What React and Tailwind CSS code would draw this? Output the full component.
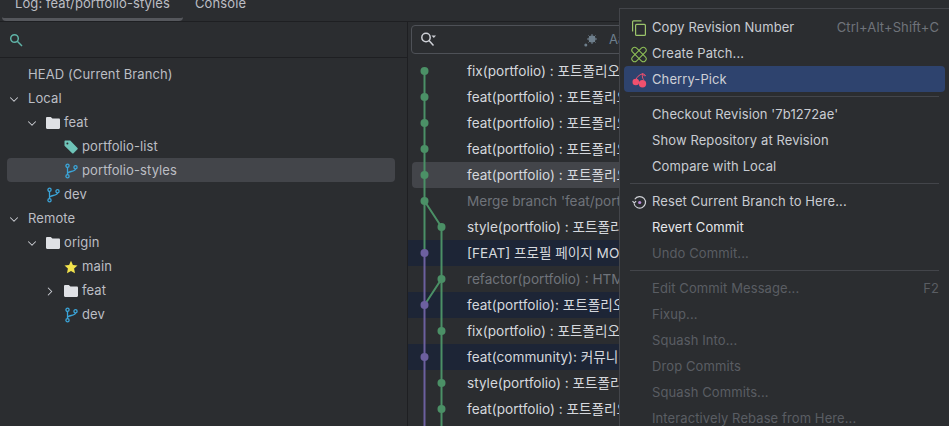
import React from "react";
import { ChevronDown, ChevronRight } from "lucide-react";

const BranchIcon = () => (
  <svg width="14" height="16" viewBox="0 0 14 16" fill="none" stroke="#3ba5d9" strokeWidth="1.3">
    <circle cx="3.5" cy="2.8" r="1.6" />
    <circle cx="3.5" cy="13.2" r="1.6" />
    <circle cx="11.5" cy="4.3" r="1.6" />
    <path d="M3.5 4.4v7.2M3.5 10.5c0-2.4 8-1.6 8-4.6" />
  </svg>
);

const FolderIcon = () => (
  <svg width="14" height="12" viewBox="0 0 14 12">
    <path d="M1.2 0h3.6l1.6 1.6h6.4c.7 0 1.2.5 1.2 1.2v8c0 .7-.5 1.2-1.2 1.2H1.2C.5 12 0 11.5 0 10.8V1.2C0 .5.5 0 1.2 0z" fill="#dfe1e5" />
  </svg>
);

const TagIcon = () => (
  <svg width="14" height="14" viewBox="0 0 14 14">
    <path d="M.5 1.2c0-.4.3-.7.7-.7h5l7.3 7.5c.4.4.4.9 0 1.3l-4 4c-.4.4-.9.4-1.3 0L.5 5.8z" fill="#6fc4b8" />
    <circle cx="3.4" cy="3.4" r="1" fill="#2b2d30" />
  </svg>
);

const StarIcon = () => (
  <svg width="14" height="14" viewBox="0 0 14 14">
    <path d="M7 .8l1.9 4.2 4.6.5-3.4 3.1.9 4.6L7 10.9l-4 2.300.9-4.600L.5 5.500l4.600-.5z" fill="#f2e34c" />
  </svg>
);

const SearchIcon = () => (
  <svg width="14" height="14" viewBox="0 0 14 14" fill="none" stroke="#5fb3a7" strokeWidth="1.5">
    <circle cx="5.5" cy="5.5" r="3.8" />
    <path d="M8.3 8.3l4.7 4.7" />
  </svg>
);

const CopyIcon = () => (
  <svg width="16" height="16" viewBox="0 0 16 16" fill="none" stroke="#9cc56b" strokeWidth="1.2">
    <path d="M1.6 11.5V1.700c0-.5.3-.9.9-.9h8" />
    <rect x="4.6" y="4.4" width="9.8" height="11" rx="1" />
  </svg>
);

const PatchIcon = () => (
  <svg width="17" height="17" viewBox="0 0 17 17" fill="none" stroke="#8fc057" strokeWidth="1.1">
    <rect x="-1" y="5.5" width="19" height="6" rx="3" transform="rotate(45 8.5 8.5)" />
    <rect x="-1" y="5.5" width="19" height="6" rx="3" transform="rotate(-45 8.5 8.5)" />
  </svg>
);

const CherryIcon = () => (
  <svg width="15" height="15" viewBox="0 0 15 15">
    <path d="M4 7c.5-3 3-5 6.5-6.300M10.500.7c-.5 2.500 0 4.500 1 6M10.500.7c1.200.1 2.500.8 3 2-1.200.3-2.300-.4-3-2z" fill="none" stroke="#f0506e" strokeWidth="1" />
    <circle cx="3.8" cy="9" r="3.3" fill="#f0506e" />
    <circle cx="10.5" cy="10.8" r="3.7" fill="#f0506e" />
  </svg>
);

const ResetIcon = () => (
  <svg width="15" height="15" viewBox="0 0 15 15" fill="none" stroke="#ced0d6" strokeWidth="1.2">
    <path d="M2.8 4.2A5.8 5.8 0 1 1 2 8.5" />
    <path d="M.5 6.2l1.8 1.8 1.8-1.8" />
    <circle cx="7.7" cy="7.5" r="1.6" fill="#b88bd9" stroke="none" />
  </svg>
);

const tree = [
  { label: "HEAD (Current Branch)", pad: "pl-[21px]" },
  { label: "Local", pad: "pl-0", open: true },
  { label: "feat", pad: "pl-[18px]", open: true, icon: <FolderIcon /> },
  { label: "portfolio-list", pad: "pl-[57px]", icon: <TagIcon /> },
  { label: "portfolio-styles", pad: "pl-[57px]", icon: <BranchIcon />, selected: true },
  { label: "dev", pad: "pl-[39px]", icon: <BranchIcon /> },
  { label: "Remote", pad: "pl-0", open: true },
  { label: "origin", pad: "pl-[18px]", open: true, icon: <FolderIcon /> },
  { label: "main", pad: "pl-[57px]", icon: <StarIcon /> },
  { label: "feat", pad: "pl-[36px]", open: false, icon: <FolderIcon /> },
  { label: "dev", pad: "pl-[57px]", icon: <BranchIcon /> },
];

const commits = [
  { text: "fix(portfolio) : 포트폴리오 수정" },
  { text: "feat(portfolio) : 포트폴리오 기능" },
  { text: "feat(portfolio) : 포트폴리오 기능" },
  { text: "feat(portfolio) : 포트폴리오 기능" },
  { text: "feat(portfolio) : 포트폴리오 기능", selected: true },
  { text: "Merge branch 'feat/portfolio-list'", dim: true },
  { text: "style(portfolio) : 포트폴리오 스타일" },
  { text: "[FEAT] 프로필 페이지 MOCK", mine: true },
  { text: "refactor(portfolio) : HTML 구조", dim: true },
  { text: "feat(portfolio): 포트폴리오 추가", mine: true },
  { text: "fix(portfolio) : 포트폴리오 수정" },
  { text: "feat(community): 커뮤니티 추가", mine: true },
  { text: "style(portfolio) : 포트폴리오 스타일" },
  { text: "feat(portfolio) : 포트폴리오 기능" },
];

const menu = [
  [
    { label: "Copy Revision Number", icon: <CopyIcon />, hint: "Ctrl+Alt+Shift+C" },
    { label: "Create Patch...", icon: <PatchIcon /> },
    { label: "Cherry-Pick", icon: <CherryIcon />, active: true },
  ],
  [
    { label: "Checkout Revision '7b1272ae'" },
    { label: "Show Repository at Revision" },
    { label: "Compare with Local" },
  ],
  [
    { label: "Reset Current Branch to Here...", icon: <ResetIcon /> },
    { label: "Revert Commit", bright: true },
    { label: "Undo Commit...", disabled: true },
  ],
  [
    { label: "Edit Commit Message...", disabled: true, hint: "F2" },
    { label: "Fixup...", disabled: true },
    { label: "Squash Into...", disabled: true },
    { label: "Drop Commits", disabled: true },
    { label: "Squash Commits...", disabled: true },
    { label: "Interactively Rebase from Here...", disabled: true },
  ],
];

const GREEN = "#4b9066";
const PURPLE = "#6c609f";

const CommitGraph = () => (
  <svg className="absolute left-0 top-0" width="60" height="368" viewBox="0 0 60 368" fill="none" strokeWidth="2">
    <path d="M16.5 13V195" stroke={GREEN} />
    <path d="M16.5 143L33.5 169M33.5 169V368M33.5 221L16.5 247" stroke={GREEN} />
    <path d="M16.5 195V368" stroke={PURPLE} />
    {[13, 39, 65, 91, 117, 143].map((y) => (
      <circle key={y} cx="16.5" cy={y} r="4" fill={GREEN} stroke="none" />
    ))}
    {[169, 221, 273, 325, 351].map((y) => (
      <circle key={y} cx="33.5" cy={y} r="4" fill={GREEN} stroke="none" />
    ))}
    {[195, 247, 299].map((y) => (
      <circle key={y} cx="16.5" cy={y} r="4" fill={PURPLE} stroke="none" />
    ))}
  </svg>
);

const commitRowClass = (c) => {
  if (c.selected) return "bg-[#43454a] ml-[4px] rounded-l pl-[55px] text-[#d5d8dd]";
  if (c.mine) return "bg-[#1d2536] pl-[59px] text-[#d5d8dd]";
  if (c.dim) return "pl-[59px] text-[#6f737a]";
  return "pl-[59px] text-[#d5d8dd]";
};

const menuItemClass = (item) => {
  if (item.disabled) return "text-[#5a5d63]";
  if (item.active) return "bg-[#2e436e] text-[#ced0d6]";
  if (item.bright) return "text-[#e6e7ea]";
  return "text-[#c9ccd2]";
};

const App = () => {
  return (
    <div className="relative w-[949px] h-[426px] overflow-hidden bg-[#2b2d30] text-[13px] tracking-[0.1px] text-[#bcbec4] font-['Inter','Noto_Sans_CJK_KR',sans-serif]">
      {/* Tabs */}
      <div className="flex h-[22px] border-b border-[#1e1f22] overflow-hidden">
        <div className="ml-[2px] w-[181px] h-[21px] border-b-[3px] border-[#55575c] rounded-b-sm pl-[13px]">
          <div className="-mt-[6px] leading-[18px]">Log: feat/portfolio-styles</div>
        </div>
        <div className="ml-[12px] -mt-[6px] leading-[18px]">Console</div>
      </div>

      <div className="flex h-[404px]">
        {/* Branches */}
        <div className="w-[408px] shrink-0 border-r border-[#1e1f22]">
          <div className="flex items-center h-[36px] pl-[9px] border-b border-[#1e1f22]">
            <SearchIcon />
          </div>
          <div className="pt-[4px] px-[7px] w-[402px]">
            {tree.map((row, i) => (
              <div
                key={i}
                className={`flex items-center h-6 pt-[2px] rounded ${row.pad} ${row.selected ? "bg-[#43454a]" : ""}`}
              >
                {row.open !== undefined && (
                  <span className="flex justify-center w-[14px] mr-[7px]">
                    {row.open ? (
                      <ChevronDown size={15} strokeWidth={1.75} color="#ced0d6" />
                    ) : (
                      <ChevronRight size={15} strokeWidth={1.75} color="#ced0d6" />
                    )}
                  </span>
                )}
                {row.icon && (
                  <span className="flex justify-center w-[14px] mr-[4px]">{row.icon}</span>
                )}
                <span>{row.label}</span>
              </div>
            ))}
          </div>
        </div>

        {/* Commit log */}
        <div className="flex-1 min-w-0">
          <div className="flex items-center h-[29px] mt-[3px] ml-[3px] border border-[#4e5157] rounded pl-[9px] w-[600px]">
            <svg width="18" height="15" viewBox="0 0 18 15" fill="none" stroke="#ced0d6" strokeWidth="1.5">
              <circle cx="5" cy="5.5" r="4.2" />
              <path d="M8 8.5l4.5 5" />
              <path d="M10.5 3.5h4.5l-2.2 2.5z" fill="#ced0d6" stroke="none" />
            </svg>
            <svg className="ml-[145px]" width="14" height="14" viewBox="0 0 14 14" fill="#6e7f8c">
              <circle cx="8" cy="6" r="3.5" />
              <path d="M8 1v10M3 6h10M4.5 2.5l7 7M11.5 2.5l-7 7" stroke="#6e7f8c" strokeWidth="1" />
              <circle cx="1.8" cy="12" r="1.5" />
            </svg>
            <span className="ml-[11px] text-[#6e7f8c]">Aa</span>
          </div>
          <div className="relative mt-[4px] text-[13.6px] tracking-normal">
            {commits.map((c, i) => (
              <div
                key={i}
                className={`flex items-center h-[26px] whitespace-nowrap ${commitRowClass(c)}`}
              >
                {c.text}
              </div>
            ))}
            <CommitGraph />
          </div>
        </div>
      </div>

      {/* Context menu */}
      <div className="absolute left-[619px] top-[8px] w-[340px] h-[430px] bg-[#2b2d30] border border-[#43454a] pt-[5px] pl-[4px]">
        {menu.map((group, g) => (
          <div key={g}>
            {g > 0 && <div className="h-px bg-[#43454a] ml-[6px] w-[309px] my-[4px]" />}
            {group.map((item) => (
              <div
                key={item.label}
                className={`flex items-center h-[26px] pt-[2px] w-[321px] pl-[7px] pr-[6px] rounded whitespace-nowrap ${menuItemClass(item)}`}
              >
                <span className="flex items-center justify-center w-[16px] mr-[5px]">{item.icon}</span>
                <span>{item.label}</span>
                {item.hint && (
                  <span className={`ml-auto ${item.disabled ? "text-[#5a5d63]" : "text-[#6f737a]"}`}>{item.hint}</span>
                )}
              </div>
            ))}
          </div>
        ))}
      </div>
    </div>
  );
};

export default App;
